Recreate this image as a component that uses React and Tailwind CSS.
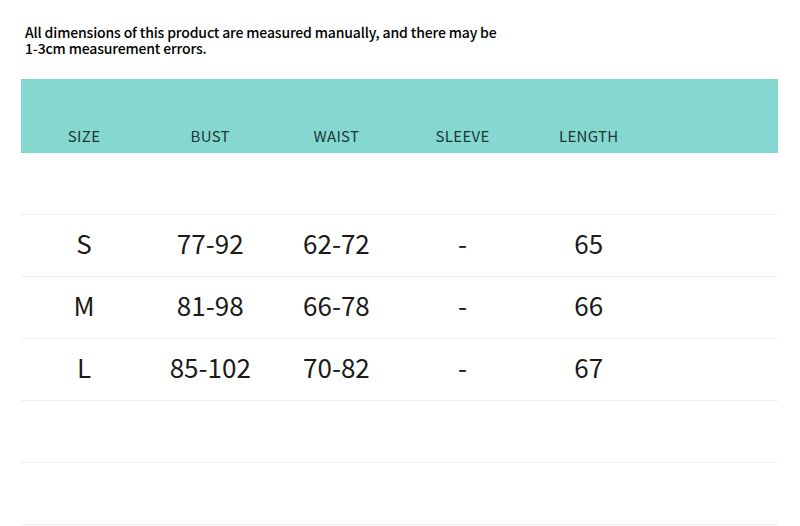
const COLUMNS = ['SIZE', 'BUST', 'WAIST', 'SLEEVE', 'LENGTH', ''];

const ROWS = [
  ['', '', '', '', '', ''],
  ['S', '77-92', '62-72', '-', '65', ''],
  ['M', '81-98', '66-78', '-', '66', ''],
  ['L', '85-102', '70-82', '-', '67', ''],
  ['', '', '', '', '', ''],
  ['', '', '', '', '', ''],
];

const cjk = { fontFamily: '"Noto Sans CJK SC", "Noto Sans", sans-serif' };

export default function App() {
  return (
    <div className="w-[800px] h-[526px] bg-white overflow-hidden" style={cjk}>
      {/* note */}
      <p className="pl-[25px] pt-[24px] h-[79px] text-[14px] leading-[16px] font-medium text-black tracking-[-0.15px]">
        All dimensions of this product are measured manually, and there may be
        <br />
        1-3cm measurement errors.
      </p>

      {/* size table */}
      <div className="ml-[21px] w-[757px]">
        <div className="grid grid-cols-6 h-[74px] bg-[#85d8cf] items-end pb-[7px]">
          {COLUMNS.map((c, i) => (
            <div key={i} className="text-center text-[15px] leading-[20px] font-normal text-[#1d3634] tracking-[0.3px]">
              {c}
            </div>
          ))}
        </div>
        {ROWS.map((row, r) => (
          <div key={r} className="grid grid-cols-6 h-[62px] items-center pb-[5px] border-b border-[#eeeeee]">
            {row.map((cell, i) => (
              <div key={i} className="text-center text-[26px] leading-[30px] font-normal text-[#1a1a1a]">
                {cell}
              </div>
            ))}
          </div>
        ))}
      </div>
    </div>
  );
}
